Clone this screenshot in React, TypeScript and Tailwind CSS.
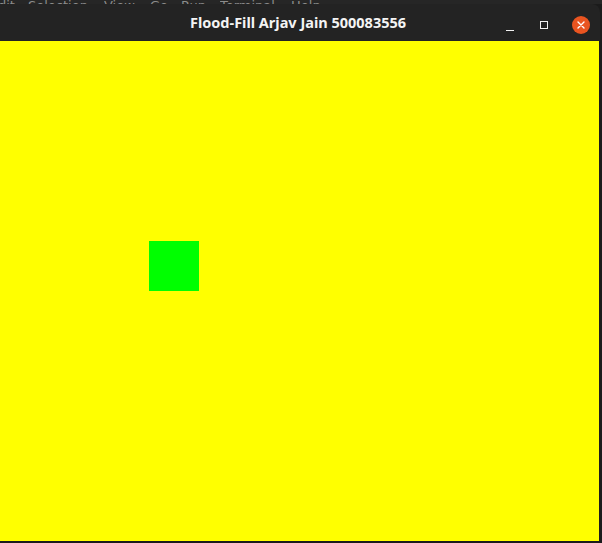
const menu = [
  { label: "dit", w: "w-[30px]" },
  { label: "Selection", w: "w-[76px]" },
  { label: "View", w: "w-[46px]" },
  { label: "Go", w: "w-[31px]" },
  { label: "Run", w: "w-[39px]" },
  { label: "Terminal", w: "w-[71px]" },
  { label: "Help", w: "w-[40px]" },
];

function WindowControls() {
  return (
    <div className="flex items-center">
      {/* minimise */}
      <div className="w-[24px] h-[24px] flex items-end justify-center pb-[6px]">
        <div className="w-[8px] h-[1.5px] bg-[#f2f2f2]" />
      </div>
      {/* maximise */}
      <div className="ml-[10px] w-[24px] h-[24px] flex items-center justify-center">
        <div className="w-[8px] h-[8px] border border-[#f2f2f2]" />
      </div>
      {/* close */}
      <div className="ml-[16px] w-[18px] h-[18px] rounded-full bg-[#e95420] flex items-center justify-center">
        <svg width="8" height="8" viewBox="0 0 8 8">
          <path d="M1 1 L7 7 M7 1 L1 7" stroke="#fff" strokeWidth="1.4" strokeLinecap="round" />
        </svg>
      </div>
    </div>
  );
}

export default function App() {
  return (
    <div className="w-[602px] h-[543px] overflow-hidden bg-[#1b1b1b] flex flex-col">
      {/* editor menu behind the window */}
      <div className="h-[4px] overflow-hidden bg-[#262626] shrink-0">
        <div
          className="flex text-[13px] leading-[13px] mt-[-1px] ml-[-2px] text-[#8c8c8c] whitespace-nowrap"
          style={{ fontFamily: '"DejaVu Sans", sans-serif' }}
        >
          {menu.map((m) => (
            <span key={m.label} className={`${m.w} shrink-0 overflow-hidden`}>
              {m.label}
            </span>
          ))}
        </div>
      </div>

      <div className="flex flex-1">
        <div className="w-[600px] flex flex-col">
          {/* title bar */}
          <div className="h-[37px] bg-[#232323] rounded-tr-[8px] flex items-center relative shrink-0">
            <div
              className="flex-1 text-center text-[#f4f4f4] font-bold text-[14.5px] pr-[4px] pt-[1px]"
              style={{ fontFamily: '"Noto Sans", "Open Sans", sans-serif' }}
            >
              Flood-Fill Arjav Jain 500083556
            </div>
            <div className="absolute right-[10px] top-[9px]">
              <WindowControls />
            </div>
          </div>

          {/* canvas */}
          <div className="w-[599px] h-[500px] bg-[#ffff00] pl-[149px] pt-[200px]">
            <div className="w-[50px] h-[50px] bg-[#00ff00]" />
          </div>
        </div>
      </div>
    </div>
  );
}
